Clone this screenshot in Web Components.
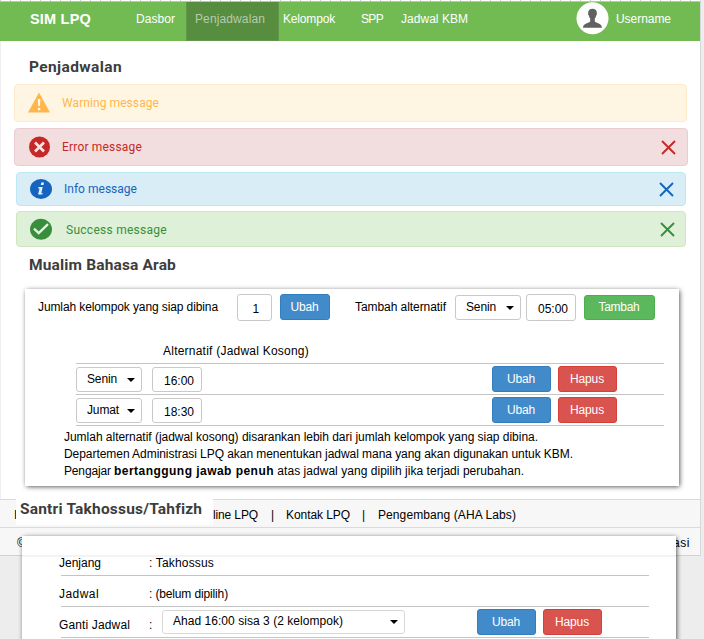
<!DOCTYPE html>
<html lang="id">
<head>
<meta charset="utf-8">
<title>SIM LPQ</title>
<style>
html,body{margin:0;height:100%;overflow:hidden}
body{background:#ededed;font:12px/16px "Liberation Sans",Arial,sans-serif;color:#000}
</style>
</head>
<body>
<schedule-page></schedule-page>
<script>
const define=(name,html,setup)=>customElements.define(name,class extends HTMLElement{
  connectedCallback(){
    if(this.shadowRoot)return;
    const t=document.createElement('template');
    t.innerHTML=html;
    this.attachShadow({mode:'open'}).appendChild(t.content.cloneNode(true));
    if(setup)setup(this,this.shadowRoot);
  }
});

/* One line of text, tracked so that it spans the width in its "w" attribute. */
define('fit-text',`<style>:host{display:block;white-space:nowrap;flex:none}span{display:inline-block;white-space:pre}</style><span><slot></slot></span>`,(el,root)=>{
  const w=+el.getAttribute('w'),s=root.querySelector('span');
  el.style.width=w+'px';
  const n=el.textContent.length;
  s.style.letterSpacing=((w-s.getBoundingClientRect().width)/Math.max(1,n))+'px';
});

define('page-title',`<style>:host{display:block;box-sizing:border-box;font:bold 15.5px/20px Roboto,sans-serif;color:#3d3d3d}</style><slot></slot>`);

define('ui-button',`<style>
:host{display:flex;box-sizing:border-box;flex:none;width:59px;height:26px;align-items:center;justify-content:center;border:1px solid #357ebd;border-radius:3px;background:#428bca;color:#fff;padding:0 1px 1px 0}
:host([kind=danger]){background:#d9534f;border-color:#d43f3a}
:host([kind=success]){background:#5cb85c;border-color:#4cae4c}
</style><slot></slot>`);

define('ui-input',`<style>
:host{display:flex;box-sizing:border-box;flex:none;width:50px;height:25px;align-items:center;justify-content:center;border:1px solid #c9c9c9;border-radius:3px;background:#fff;padding:3px 0 0 4px}
</style><slot></slot>`);

define('ui-select',`<style>
:host{display:flex;box-sizing:border-box;flex:none;width:66px;height:25px;align-items:center;justify-content:space-between;border:1px solid #c9c9c9;border-radius:3px;background:#fff;padding:0 6px 1px 10px}
svg{display:block;margin-top:2px}
</style><slot></slot><svg width="8" height="4"><path d="M0 0h8L4 4z"/></svg>`);

define('site-header',`<style>
:host{display:block;padding-top:1px;background:repeating-linear-gradient(90deg,#c8c8c8 0 1px,#fff 1px 10px) 0 0/100% 1px no-repeat #fff}
nav{display:flex;height:39px;background:#72bb53;border-top:1px solid #bcc4b8;color:#fff}
fit-text{margin-top:9px}
.brand{font-weight:bold;font-size:14.5px;margin-left:30px}
.on{box-sizing:border-box;width:93px;padding-left:8px;background:#568d3e;border:1px solid #62954d;border-top:0;color:#b9c9b1;margin-left:11px}
.av{margin:0 7px 0 auto;display:block}
.user{margin-right:29px}
</style><nav>
<fit-text class="brand" w="61">SIM LPQ</fit-text>
<fit-text w="39" style="margin-left:45px">Dasbor</fit-text>
<div class="on"><fit-text w="70">Penjadwalan</fit-text></div>
<fit-text w="52" style="margin-left:4px">Kelompok</fit-text>
<fit-text w="22" style="margin-left:26px">SPP</fit-text>
<fit-text w="67" style="margin-left:18px">Jadwal KBM</fit-text>
<svg class="av" width="33" height="33" viewBox="0 0 33 33"><circle cx="16.500" cy="16.300" r="16" fill="#fff"/><path fill="#616161" d="M16.500 6.800c-3 0-4.500 1.700-4.300 4.300-.3.300-.2 1.700.5 2.200.3 1.500.9 2.600 1.500 3.300v3c-1 1.900-7.200 1.600-7.200 6.200h19c0-4.600-6.200-4.300-7.200-6.200v-3c.6-.7 1.200-1.800 1.500-3.300.7-.5.800-1.900.5-2.200.2-2.600-1.300-4.300-4.300-4.300z"/></svg>
<fit-text class="user" w="55">Username</fit-text>
</nav>`);

const icons={
warning:'<path d="M11 .5L22 20.500H0z" fill="#ffb74d"/><path d="M9.800 7h2.600l-.4 7H10.200zM9.900 15.700h2.400v2.500H9.900z" fill="#fff8e7"/>',
error:'<circle cx="11.500" cy="11" r="10.500" fill="#c62828"/><path d="M7 6.500l9 9M16 6.500l-9 9" stroke="#f5e2e2" stroke-width="2.700"/>',
info:'<ellipse cx="11" cy="11" rx="11" ry="10" fill="#1565c0"/><path d="M11.300 4.500h2.700l-.5 2.600h-2.700zM8.500 9h4.200l-1.400 6.300h1.500l-.4 1.300H8.100l1.400-6.200H8.200z" fill="#e3f0f8"/>',
success:'<ellipse cx="11" cy="11.300" rx="11" ry="10.500" fill="#388e3c"/><path d="M4 10.700l4.700 4.500 9.300-9" fill="none" stroke="#e4f3df" stroke-width="2.300"/>'};
define('alert-box',`<style>
:host{display:flex;box-sizing:border-box;align-items:center;border:1px solid #fdeacb;border-radius:4px;background:#fef6e3;color:#ffb74d;font-family:Roboto,sans-serif;padding:0 11px 0 13px;height:38px}
:host([kind=error]){background:#f2dede;border-color:#ebccd1;color:#c62828}
:host([kind=info]){background:#d9edf7;border-color:#bce8f1;color:#1565c0}
:host([kind=success]){background:#dff0d8;border-color:#d0e6bf;color:#388e3c;padding-right:10px}
svg{display:block;flex:none}.txt{margin-left:12px}.x{margin-left:auto}
:host([kind=warning]) .x{display:none}
:host([kind=success]) .txt{margin-left:14px;padding-top:2px}
</style><svg class="i" width="22" height="22"></svg><div class="txt"><slot></slot></div>
<svg class="x" width="15" height="15" viewBox="0 0 15 15"><path d="M1 1l13 13M14 1L1 14" stroke="currentColor" stroke-width="1.900"/></svg>`,(el,root)=>{
  root.querySelector('.i').innerHTML=icons[el.getAttribute('kind')];
});

define('ui-card',`<style>:host{display:block;box-sizing:border-box;width:654px;background:#fff;box-shadow:.5px .5px 5px rgba(0,0,0,.75)}</style><slot></slot>`);

define('slot-row',`<style>
:host{display:flex;box-sizing:border-box;height:31px;width:588px;border-top:1px solid #c4c4c4;align-items:center}
ui-input{margin-left:10px}.u{margin-left:290px}.h{margin-left:7px}
</style><ui-select><slot name="day"></slot></ui-select><ui-input><slot name="time"></slot></ui-input>
<ui-button class="u"><fit-text w="28">Ubah</fit-text></ui-button><ui-button class="h" kind="danger"><fit-text w="34">Hapus</fit-text></ui-button>`);

define('arabic-card',`<style>
:host{display:block}
ui-card{height:197px}
.top{display:flex;align-items:center;height:36px;padding-left:13px}
.rows{margin:18px 0 0 51px;width:588px}
.head{margin:0 0 4px 87px}
.end{border-top:1px solid #c4c4c4}
.note{margin:3px 0 0 39px;line-height:17px}
.p{display:flex}
</style><ui-card>
<div class="top"><fit-text w="180">Jumlah kelompok yang siap dibina</fit-text>
<ui-input style="width:35px;height:27px;margin-left:19px;padding-left:2px"><fit-text w="6">1</fit-text></ui-input>
<ui-button style="width:50px;margin-left:8px"><fit-text w="28">Ubah</fit-text></ui-button>
<fit-text w="91" style="margin-left:25px">Tambah alternatif</fit-text>
<ui-select style="margin-left:9px"><fit-text w="30">Senin</fit-text></ui-select>
<ui-input style="height:27px;margin-left:5px"><fit-text w="30">05:00</fit-text></ui-input>
<ui-button kind="success" style="width:71px;height:25px;margin-left:8px"><fit-text w="41">Tambah</fit-text></ui-button></div>
<div class="rows"><fit-text class="head" w="146">Alternatif (Jadwal Kosong)</fit-text>
<slot-row><fit-text slot="day" w="30">Senin</fit-text><fit-text slot="time" w="30">16:00</fit-text></slot-row>
<slot-row><fit-text slot="day" w="32">Jumat</fit-text><fit-text slot="time" w="30">18:30</fit-text></slot-row>
<div class="end"></div></div>
<div class="note"><fit-text w="474">Jumlah alternatif (jadwal kosong) disarankan lebih dari jumlah kelompok yang siap dibina.</fit-text>
<fit-text w="509">Departemen Administrasi LPQ akan menentukan jadwal mana yang akan digunakan untuk KBM.</fit-text>
<div class="p"><fit-text w="50">Pengajar </fit-text><fit-text w="160" style="font-weight:bold">bertanggung jawab penuh</fit-text><fit-text w="250"> atas jadwal yang dipilih jika terjadi perubahan.</fit-text></div></div>
</ui-card>`);

define('tahfizh-card',`<style>
:host{display:block}
ui-card{height:120px;padding:12px 0 0 39px;background:linear-gradient(#fff 0 19px,#f3f3f3 19px 21px,#fff 21px)}
.r{display:flex;align-items:center;box-sizing:border-box;width:588px;height:31px;border-bottom:1px solid #c4c4c4}
.r.first{height:28px;padding-top:2px}
.k{width:90px;margin-left:-2px}
.sel{width:243px;height:24px;margin:-1px 0 0 9px;border-color:#d8d8d8}
</style><ui-card>
<div class="r first"><div class="k"><fit-text w="42">Jenjang</fit-text></div><fit-text w="65">: Takhossus</fit-text></div>
<div class="r" style="padding-top:6px"><div class="k"><fit-text w="40">Jadwal</fit-text></div><fit-text w="79">: (belum dipilih)</fit-text></div>
<div class="r"><div class="k" style="padding-top:6px"><fit-text w="71">Ganti Jadwal</fit-text></div><fit-text w="4" style="margin-top:6px">:</fit-text>
<ui-select class="sel"><fit-text w="170">Ahad 16:00 sisa 3 (2 kelompok)</fit-text></ui-select>
<ui-button style="margin-left:72px"><fit-text w="28">Ubah</fit-text></ui-button><ui-button kind="danger" style="margin-left:7px"><fit-text w="34">Hapus</fit-text></ui-button></div>
</ui-card>`);

define('site-footer',`<style>
:host{display:block;background:#f7f7f7;border-bottom:1px solid #d2d2d2}
.r{display:flex;align-items:center;box-sizing:border-box;height:28px;border-top:1px solid #dadada;padding:3px 10px 0 13px}
</style><div class="r"><fit-text w="4" style="margin-left:1px">I</fit-text><fit-text w="45" style="margin-left:195px">line LPQ</fit-text><fit-text w="3" style="margin-left:13px">|</fit-text><fit-text w="64" style="margin-left:12px">Kontak LPQ</fit-text><fit-text w="3" style="margin-left:12px">|</fit-text><fit-text w="138" style="margin-left:13px">Pengembang (AHA Labs)</fit-text></div>
<div class="r"><fit-text w="9" style="margin-left:4px">©</fit-text><fit-text w="17" style="margin-left:auto">asi</fit-text></div>`);

define('schedule-page',`<style>
:host{display:block;position:relative;height:639px;overflow:hidden}
main{box-sizing:border-box;width:701px;height:556px;background:linear-gradient(90deg,#efefef 1px,#fff 1px);border-right:1px solid #d8d8d8;display:flow-root}
.t1{margin:16px 0 7px 29px}.t2{margin:8px 0 14px 29px}
.over{position:absolute;left:16px;top:497px;width:197px;height:28px;background:#fff;padding:2px 0 0 4px}
.second{position:absolute;left:22px;top:536px}
</style><main><site-header></site-header>
<page-title class="t1"><fit-text w="93">Penjadwalan</fit-text></page-title>
<alert-box kind="warning" style="margin:0 13px 6px 14px"><fit-text w="97">Warning message</fit-text></alert-box>
<alert-box kind="error" style="margin:0 12px 6px 14px"><fit-text w="80">Error message</fit-text></alert-box>
<alert-box kind="info" style="height:34px;margin:0 14px 5px 16px"><fit-text w="73">Info message</fit-text></alert-box>
<alert-box kind="success" style="height:36px;margin:0 14px 0 16px"><fit-text w="101">Success message</fit-text></alert-box>
<page-title class="t2"><fit-text w="147">Mualim Bahasa Arab</fit-text></page-title>
<arabic-card style="margin:0 0 13px 25px"></arabic-card>
<site-footer></site-footer></main>
<page-title class="over"><fit-text w="182">Santri Takhossus/Tahfizh</fit-text></page-title>
<tahfizh-card class="second"></tahfizh-card>`);
</script>
</body>
</html>
